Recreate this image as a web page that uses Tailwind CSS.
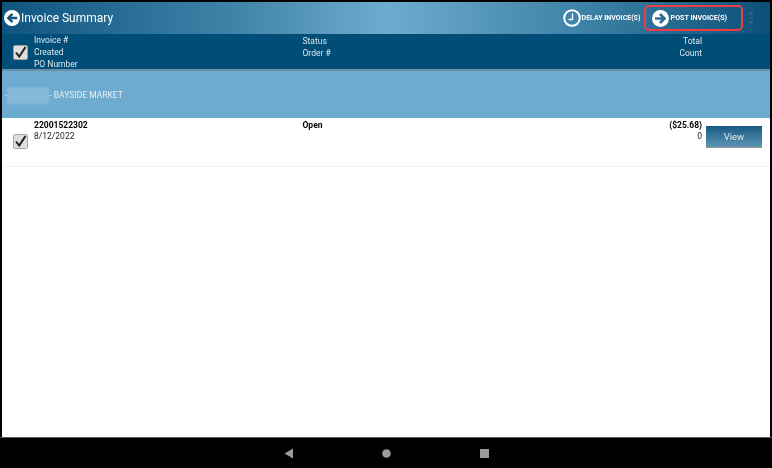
<!DOCTYPE html>
<html>
<head>
<meta charset="utf-8">
<script src="https://cdn.jsdelivr.net/npm/@tailwindcss/browser@4"></script>
</head>
<body class="m-0">
<div class="relative w-[772px] h-[468px] bg-black pt-[2px] pl-[2px] pr-[2px] flex flex-col font-['Roboto',sans-serif] overflow-hidden blur-[0.35px]">
  <header class="h-[32px] shrink-0 flex items-center bg-[linear-gradient(90deg,#0f5580_0%,#3f83a8_30%,#6dacce_50%,#3f83a8_75%,#0c5078_100%)] text-white">
    <svg class="ml-[2px] w-[16px] h-[16px] shrink-0" viewBox="0 0 17 17"><circle cx="8.5" cy="8.5" r="8.5" fill="#fff"/><path d="M14 8.5H5M9 4L4.5 8.5 9 13" fill="none" stroke="#0f5580" stroke-width="2.6"/></svg>
    <span class="ml-[1px] text-[12px] leading-none">Invoice Summary</span>
    <div class="ml-auto flex items-center mr-[43px]">
      <svg class="w-[18px] h-[18px] shrink-0" viewBox="0 0 18 18"><circle cx="9" cy="9" r="7.8" fill="none" stroke="#fff" stroke-width="2"/><path d="M9.5 4.5V10.5H5.5" fill="none" stroke="#fff" stroke-width="1.4"/></svg>
      <span class="ml-[1px] text-[7px] font-bold leading-none w-[60px] whitespace-nowrap">DELAY INVOICE(S)</span>
      <svg class="ml-[10px] w-[17px] h-[17px] shrink-0" viewBox="0 0 17 17"><circle cx="8.5" cy="8.5" r="8.5" fill="#fff"/><path d="M3 8.5H12M8 4L12.5 8.5 8 13" fill="none" stroke="#2a6f99" stroke-width="2.6"/></svg>
      <span class="ml-[2px] text-[7.1px] font-bold leading-none whitespace-nowrap">POST INVOICE(S)</span>
    </div>
  </header>
  <div class="h-[35px] shrink-0 bg-[#004d78] text-[#dbe7ee] text-[8.5px] leading-[12px] flex items-center pt-[1px]">
    <span class="ml-[11px] w-[15px] h-[15px] shrink-0 rounded-[2px] bg-[#dedede] border-[1.5px] border-[#a0a0a0] flex items-center justify-center">
      <svg class="w-[13px] h-[13px]" viewBox="0 0 13 13"><path d="M2 6.5L5.2 10.5 11.5 1" fill="none" stroke="#222" stroke-width="2"/></svg>
    </span>
    <div class="ml-[6px] w-[268.5px]"><div>Invoice #</div><div>Created</div><div>PO Number</div></div>
    <div class="self-start w-[150px]"><div>Status</div><div>Order #</div></div>
    <div class="ml-auto self-start mr-[68px] text-right"><div>Total</div><div>Count</div></div>
  </div>
  <div class="h-[2px] shrink-0 bg-[#6b8ea6]"></div>
  <div class="h-[47px] shrink-0 bg-[#6dacd0] text-[#e6f0f6] text-[8.5px] flex items-center pl-[3px] pt-[1px]">
    <span>-</span>
    <span class="w-[42px] h-[17px] bg-[#84bad8] blur-[1px]"></span>
    <span>- BAYSIDE MARKET</span>
  </div>
  <div class="h-[49px] shrink-0 bg-white border-b border-[#f2f2f2] flex text-[8.5px] leading-[11px] text-[#222]">
    <span class="ml-[11px] mt-[16px] w-[15px] h-[15px] shrink-0 rounded-[2px] bg-[#dedede] border-[1.5px] border-[#a8a8a8] flex items-center justify-center">
      <svg class="w-[13px] h-[13px]" viewBox="0 0 13 13"><path d="M2 6.5L5.2 10.5 11.5 1" fill="none" stroke="#222" stroke-width="2"/></svg>
    </span>
    <div class="ml-[6px] w-[268.5px] pt-[2px]"><div class="font-bold text-black">22001522302</div><div>8/12/2022</div></div>
    <div class="pt-[2px] font-bold text-black">Open</div>
    <div class="ml-auto pt-[2px] text-right"><div class="font-bold text-black">($25.68)</div><div>0</div></div>
    <div class="ml-[4px] mr-[8px] mt-[8px] w-[56px] h-[22px] bg-[linear-gradient(180deg,#175a83,#5e95b5)] border-b border-[#999] text-[#dce9f0] text-[9.5px] flex items-center justify-center">View</div>
  </div>
  <main class="flex-1 bg-white"></main>
  <nav class="h-[31px] shrink-0 -mx-[2px] bg-black border-t border-[#555] flex items-center justify-center gap-[88.5px]">
    <svg class="w-[10px] h-[11px]" viewBox="0 0 10 11"><path d="M9 0.5V10.5L0.5 5.5Z" fill="#9a9a9a"/></svg>
    <svg class="w-[9px] h-[9px]" viewBox="0 0 9 9"><circle cx="4.5" cy="4.5" r="4.3" fill="#9a9a9a"/></svg>
    <span class="w-[9px] h-[9px] bg-[#9a9a9a]"></span>
  </nav>
  <div class="absolute left-[644px] top-[5px] w-[99px] h-[26px] rounded-[5px] border-[2.5px] border-[#f03c44]"></div>
  <div class="absolute left-[749px] top-[12px] flex flex-col gap-[2px]"><span class="w-[4px] h-[2.5px] bg-[#2f5f80]"></span><span class="w-[4px] h-[2.5px] bg-[#2f5f80]"></span><span class="w-[4px] h-[2.5px] bg-[#2f5f80]"></span></div>
</div>
</body>
</html>
